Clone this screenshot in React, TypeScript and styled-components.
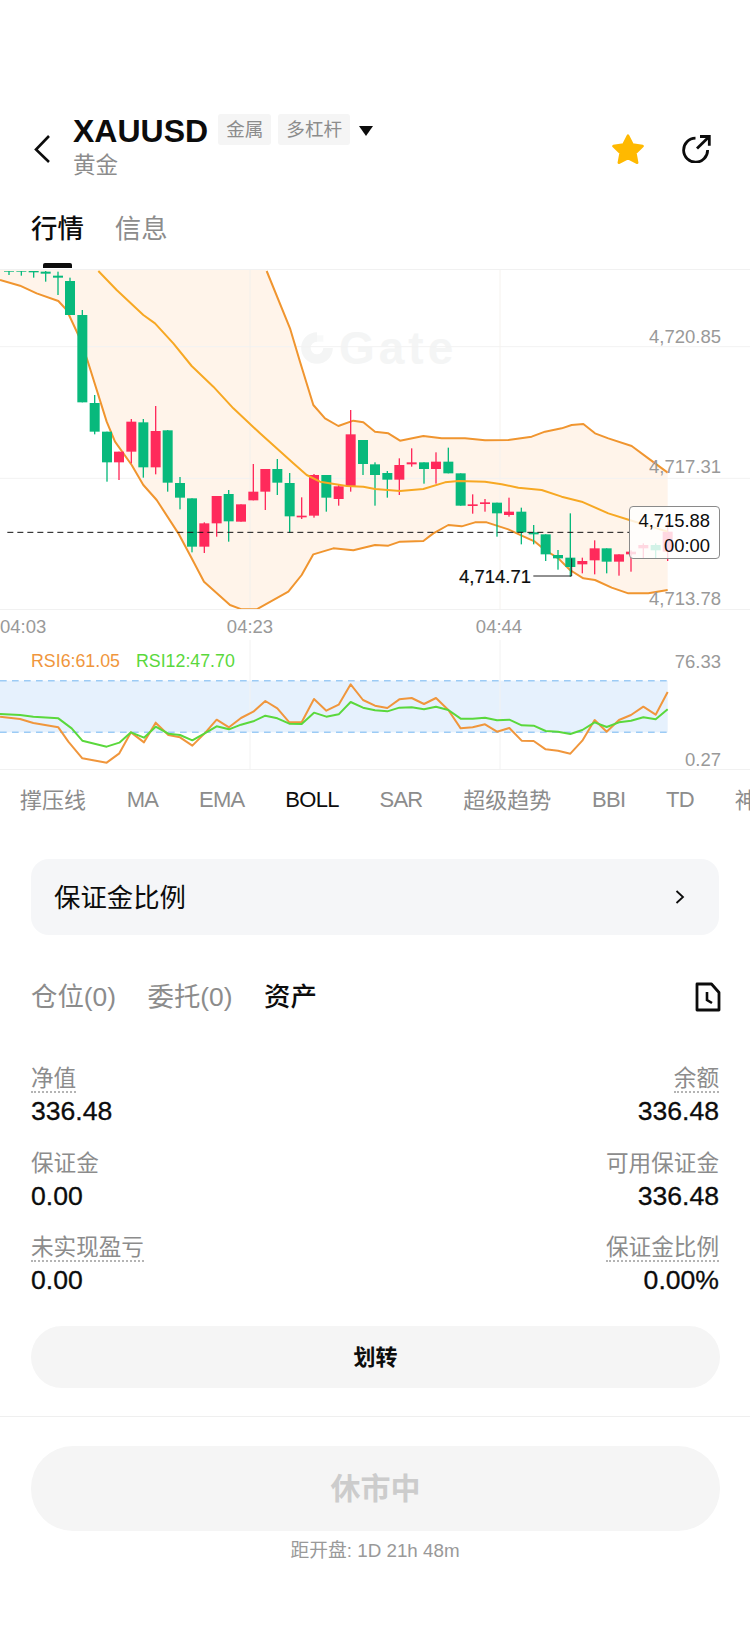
import styled, { createGlobalStyle } from 'styled-components';

const FONT = '"Liberation Sans", "Noto Sans CJK SC", sans-serif';
const GREEN = '#08b97c';
const RED = '#ff2a5b';

const GlobalStyle = createGlobalStyle`
  html, body {
    margin: 0;
    padding: 0;
    background: #ffffff;
  }
`;

const S = {
  Page: styled.div`
    width: 750px;
    height: 1626px;
    overflow: hidden;
    background: #ffffff;
    color: #0c0c0c;
    font-family: ${FONT};
  `,
  TopBar: styled.header`
    display: flex;
    align-items: flex-start;
    padding: 114px 39px 0 33px;
  `,
  BackIcon: styled.svg`
    width: 18px;
    height: 30px;
    margin: 20px 22px 0 0;
    flex: none;
  `,
  TitleBlock: styled.div`
    flex: 1;
  `,
  TitleRow: styled.div`
    display: flex;
    align-items: flex-start;
    height: 31px;
  `,
  Symbol: styled.h1`
    margin: 1px 10px 0 0;
    font-size: 32px;
    line-height: 32px;
    font-weight: 700;
  `,
  Tag: styled.span`
    height: 31px;
    padding: 0 8px;
    margin-right: 7px;
    border-radius: 3px;
    background: #f5f5f5;
    color: #8c8c8c;
    font-size: 18.6px;
    line-height: 31px;
  `,
  Caret: styled.span`
    width: 0;
    height: 0;
    margin: 12px 0 0 2px;
    border-left: 7px solid transparent;
    border-right: 7px solid transparent;
    border-top: 10px solid #0c0c0c;
  `,
  SubTitle: styled.div`
    margin-top: 6px;
    font-size: 22.6px;
    line-height: 30px;
    color: #8c8c8c;
  `,
  Actions: styled.div`
    display: flex;
    align-items: center;
    gap: 37px;
    margin-top: 19px;
  `,
  TabBar: styled.nav`
    display: flex;
    gap: 31px;
    height: 58px;
    margin-top: 30px;
    padding-left: 31px;
  `,
  Tab: styled.div<{ $active?: boolean }>`
    display: flex;
    flex-direction: column;
    align-items: center;
    gap: 16px;
    font-size: 26.4px;
    line-height: 36px;
    font-weight: ${p => (p.$active ? 500 : 400)};
    color: ${p => (p.$active ? '#0c0c0c' : '#8c8c8c')};
    &::after {
      content: '';
      display: ${p => (p.$active ? 'block' : 'none')};
      width: 29px;
      height: 5px;
      border-radius: 2px 2px 0 0;
      background: #0c0c0c;
    }
  `,
  ChartCanvas: styled.section`
    position: relative;
    width: 750px;
    height: 341px;
    border-top: 1px solid #f1f1f1;
    border-bottom: 1px solid #f1f1f1;
    box-sizing: border-box;
  `,
  ChartSvg: styled.svg`
    position: relative;
    z-index: 1;
    display: block;
    width: 750px;
  `,
  Watermark: styled.div`
    position: absolute;
    top: 55px;
    left: 298px;
    display: flex;
    align-items: center;
    gap: 3px;
    color: #f4f5f5;
    font-size: 46px;
    line-height: 46px;
    font-weight: 700;
    letter-spacing: 4px;
  `,
  PriceLabel: styled.span<{ $center: number }>`
    position: absolute;
    z-index: 2;
    right: 29px;
    top: ${p => p.$center - 11}px;
    font-size: 18.5px;
    line-height: 22px;
    color: #999999;
  `,
  Tooltip: styled.div`
    position: absolute;
    z-index: 3;
    left: 629px;
    top: 236px;
    width: 91px;
    height: 53px;
    box-sizing: border-box;
    padding: 1px 9px 0 0;
    border: 1px solid #8a8a8a;
    border-radius: 4px;
    background: rgba(255, 255, 255, 0.82);
    text-align: right;
    font-size: 18.4px;
    line-height: 25px;
    color: #0c0c0c;
  `,
  LowLabel: styled.span`
    position: absolute;
    z-index: 2;
    right: 219px;
    top: 296px;
    font-size: 18.5px;
    line-height: 22px;
    color: #0c0c0c;
    -webkit-text-stroke: 0.2px #0c0c0c;
  `,
  TimeAxis: styled.div`
    position: relative;
    height: 30px;
  `,
  TimeLabel: styled.span<{ $center?: number }>`
    position: absolute;
    top: 6px;
    left: ${p => (p.$center === undefined ? 0 : `${p.$center}px`)};
    transform: ${p => (p.$center === undefined ? 'none' : 'translateX(-50%)')};
    font-size: 18.5px;
    line-height: 22px;
    color: #999999;
  `,
  RsiCanvas: styled.section`
    position: relative;
    width: 750px;
    height: 130px;
    box-sizing: border-box;
    border-bottom: 1px solid #f1f1f1;
  `,
  RsiLegend: styled.div`
    position: absolute;
    z-index: 2;
    top: 10px;
    left: 31px;
    display: flex;
    gap: 16px;
    font-size: 17.8px;
    line-height: 22px;
  `,
  RsiValue: styled.span<{ $color: string }>`
    color: ${p => p.$color};
  `,
  IndicatorBar: styled.nav`
    display: flex;
    align-items: center;
    gap: 40.7px;
    height: 60px;
    padding-left: 20px;
    overflow: hidden;
    white-space: nowrap;
  `,
  Indicator: styled.span<{ $active?: boolean; $cjk?: boolean }>`
    flex: none;
    font-size: 22px;
    letter-spacing: ${p => (p.$cjk ? '0' : '-0.7px')};
    transform: translateY(${p => (p.$cjk ? '-2px' : '0')});
    color: ${p => (p.$active ? '#0c0c0c' : '#8c8c8c')};
  `,
  MarginCard: styled.div`
    display: flex;
    align-items: center;
    justify-content: space-between;
    height: 76px;
    box-sizing: border-box;
    margin: 29px 31px 0;
    padding: 0 34px 4px 23px;
    border-radius: 18px;
    background: #f5f6f8;
    font-size: 26.4px;
    svg {
      margin-top: 4px;
    }
  `,
  PositionTabs: styled.div`
    display: flex;
    align-items: center;
    gap: 31.5px;
    height: 36px;
    margin: 44px 29px 0 31px;
  `,
  PositionTab: styled.span<{ $active?: boolean }>`
    font-size: 26.4px;
    line-height: 36px;
    font-weight: ${p => (p.$active ? 500 : 400)};
    color: ${p => (p.$active ? '#0c0c0c' : '#8c8c8c')};
  `,
  HistoryIcon: styled.svg`
    width: 26px;
    height: 30px;
    margin-left: auto;
  `,
  StatsGrid: styled.div`
    display: grid;
    grid-template-columns: 1fr 1fr;
    grid-auto-rows: 84.5px;
    margin: 52px 31px 0;
  `,
  Stat: styled.div<{ $right?: boolean }>`
    display: flex;
    flex-direction: column;
    align-items: ${p => (p.$right ? 'flex-end' : 'flex-start')};
  `,
  StatLabel: styled.span<{ $dotted?: boolean }>`
    height: 24px;
    font-size: 22.6px;
    line-height: 24px;
    color: #8c8c8c;
    border-bottom: 2px dotted ${p => (p.$dotted ? '#b4b4b4' : 'transparent')};
  `,
  StatValue: styled.span`
    margin-top: 3px;
    font-size: 26.6px;
    line-height: 30px;
    color: #0c0c0c;
    -webkit-text-stroke: 0.3px #0c0c0c;
  `,
  TransferButton: styled.button`
    display: block;
    width: 689px;
    height: 62px;
    margin: 5px 0 0 31px;
    padding: 0 0 4px;
    border: 0;
    border-radius: 31px;
    background: #f5f5f5;
    color: #0c0c0c;
    font-family: ${FONT};
    font-size: 22px;
    font-weight: 700;
  `,
  Divider: styled.hr`
    height: 1px;
    margin: 28px 0 0;
    border: 0;
    background: #efefef;
  `,
  ClosedButton: styled.button`
    display: block;
    width: 689px;
    height: 85px;
    margin: 29px 0 0 31px;
    padding: 0 0 4px;
    border: 0;
    border-radius: 42px;
    background: #f5f5f5;
    color: #cccccc;
    font-family: ${FONT};
    font-size: 30px;
    font-weight: 700;
  `,
  Countdown: styled.div`
    margin-top: 8px;
    text-align: center;
    font-size: 18.8px;
    line-height: 24px;
    color: #999999;
  `,
};

// all chart coordinates below are in 1/3 px, y measured from page y=265
type Candle = [number, number, number, number, number, 'g' | 'r'];

const candles: Candle[] = [
  [27, 18, 30, 18, 20, 'g'],
  [64, 18, 32, 18, 20, 'g'],
  [101, 18, 38, 18, 22, 'g'],
  [137, 18, 50, 20, 26, 'g'],
  [174, 20, 90, 32, 38, 'g'],
  [210, 38, 150, 48, 150, 'g'],
  [247, 135, 412, 150, 412, 'g'],
  [284, 390, 508, 414, 500, 'g'],
  [321, 500, 650, 500, 592, 'g'],
  [357, 560, 645, 560, 592, 'r'],
  [394, 462, 595, 470, 560, 'r'],
  [430, 462, 638, 472, 607, 'g'],
  [467, 423, 628, 498, 607, 'r'],
  [503, 495, 680, 496, 653, 'g'],
  [540, 636, 733, 654, 698, 'g'],
  [576, 700, 862, 700, 845, 'g'],
  [613, 772, 864, 775, 845, 'r'],
  [650, 693, 815, 693, 775, 'r'],
  [686, 675, 830, 687, 769, 'g'],
  [723, 718, 770, 718, 770, 'r'],
  [760, 597, 706, 680, 706, 'r'],
  [796, 612, 735, 612, 680, 'r'],
  [832, 582, 690, 612, 653, 'g'],
  [869, 624, 803, 654, 754, 'g'],
  [905, 697, 762, 752, 757, 'r'],
  [942, 627, 758, 630, 752, 'r'],
  [979, 630, 740, 630, 698, 'g'],
  [1016, 660, 722, 664, 702, 'r'],
  [1052, 435, 680, 508, 663, 'r'],
  [1089, 525, 630, 525, 597, 'g'],
  [1125, 592, 722, 598, 630, 'g'],
  [1162, 618, 698, 624, 644, 'g'],
  [1198, 580, 690, 600, 644, 'r'],
  [1235, 550, 605, 592, 598, 'r'],
  [1272, 592, 656, 592, 612, 'g'],
  [1308, 562, 656, 590, 612, 'r'],
  [1345, 548, 625, 590, 625, 'g'],
  [1382, 625, 722, 625, 722, 'g'],
  [1418, 688, 746, 718, 723, 'r'],
  [1455, 702, 740, 712, 717, 'r'],
  [1491, 713, 815, 713, 745, 'g'],
  [1527, 698, 755, 740, 750, 'r'],
  [1564, 728, 838, 740, 802, 'g'],
  [1601, 780, 838, 802, 808, 'g'],
  [1637, 808, 888, 808, 868, 'g'],
  [1674, 855, 914, 870, 880, 'g'],
  [1711, 745, 935, 878, 906, 'g'],
  [1747, 878, 925, 888, 898, 'r'],
  [1784, 826, 928, 850, 886, 'r'],
  [1820, 850, 925, 850, 890, 'g'],
  [1857, 868, 932, 868, 890, 'r'],
  [1893, 856, 920, 860, 868, 'r'],
  [1930, 835, 882, 840, 850, 'r'],
  [1967, 835, 880, 840, 856, 'g'],
  [2003, 770, 888, 800, 860, 'r'],
];

const upperBand = '800,18 870,190 900,290 940,420 975,460 1015,483 1060,467 1090,472 1125,500 1165,505 1200,527 1270,513 1325,520 1395,520 1455,526 1525,525 1595,515 1635,500 1685,490 1715,480 1750,477 1785,505 1825,520 1895,543 1945,580 2003,623';
const middleBand = '295,18 350,75 430,150 465,175 520,235 575,303 640,365 700,430 780,505 830,550 880,595 920,630 960,650 1040,663 1090,665 1125,672 1200,678 1270,672 1335,652 1375,648 1455,650 1505,658 1555,668 1625,675 1685,695 1745,710 1825,745 1888,765 2003,800';
const lowerBand = '0,45 60,62 110,85 175,108 200,135 235,210 262,285 320,470 345,530 395,600 430,660 470,705 535,805 575,880 612,950 690,1020 725,1033 770,1033 865,980 905,930 940,868 1000,850 1060,856 1125,840 1165,842 1200,830 1270,828 1300,805 1345,780 1385,784 1425,772 1460,772 1525,793 1565,812 1605,830 1635,855 1675,880 1710,915 1750,940 1785,945 1835,968 1885,985 1945,985 2003,975';
const bandFill = `0,12 800,12 ${upperBand} ${lowerBand.split(' ').reverse().join(' ')}`;

const rsi6 = '0,290 60,297 100,309 175,322 205,365 247,415 320,428 358,400 393,337 432,367 467,308 505,345 540,352 577,377 614,340 650,299 687,322 723,294 760,275 796,243 832,265 868,307 905,307 942,237 979,272 1016,254 1052,193 1089,240 1125,257 1162,264 1198,238 1235,234 1272,252 1308,234 1345,270 1382,325 1418,322 1455,313 1491,335 1528,324 1565,362 1601,363 1637,388 1674,392 1711,401 1747,362 1784,300 1820,335 1857,300 1893,285 1930,260 1967,284 2003,216';
const rsi12 = '0,282 60,285 100,290 175,295 215,325 247,362 320,380 358,368 393,337 432,353 467,320 505,341 540,345 577,361 614,340 650,319 687,328 723,314 760,304 796,287 832,295 868,311 905,312 942,278 979,290 1016,283 1052,246 1089,263 1125,271 1162,274 1198,263 1235,262 1272,268 1308,260 1345,270 1382,296 1418,296 1455,293 1491,301 1528,299 1565,316 1601,317 1637,333 1674,335 1711,342 1747,330 1784,307 1820,321 1857,307 1893,302 1930,292 1967,298 2003,268';

const indicators = ['撑压线', 'MA', 'EMA', 'BOLL', 'SAR', '超级趋势', 'BBI', 'TD', '神'];

const stats = [
  { label: '净值', value: '336.48', dotted: true },
  { label: '余额', value: '336.48', dotted: true, right: true },
  { label: '保证金', value: '0.00' },
  { label: '可用保证金', value: '336.48', right: true },
  { label: '未实现盈亏', value: '0.00', dotted: true },
  { label: '保证金比例', value: '0.00%', dotted: true, right: true },
];

function CandleMark({ c }: { c: Candle }) {
  const [x, wickTop, wickBottom, bodyTop, bodyBottom, side] = c;
  const color = side === 'g' ? GREEN : RED;
  return (
    <g fill={color}>
      <rect x={x - 2} y={wickTop} width={4} height={wickBottom - wickTop} />
      <rect x={x - 15} y={bodyTop} width={30} height={bodyBottom - bodyTop} />
    </g>
  );
}

function MainChart() {
  return (
    <S.ChartCanvas>
      <S.Watermark>
        <svg width="38" height="38" viewBox="0 0 36 36" fill="none">
          <path d="M18 3a15 15 0 1 0 15 15h-9a6 6 0 1 1-6-6V3z" fill="#f4f5f5" />
          <path d="M18 12h6V6h-6z" fill="#f4f5f5" opacity="0.6" />
        </svg>
        Gate
      </S.Watermark>
      <S.ChartSvg viewBox="0 15 2250 1017" height="339">
        <polygon points={bandFill} fill="#fff4ea" />
        <line x1="0" y1="245" x2="2250" y2="245" stroke="#f2f2f2" strokeWidth="3" />
        <line x1="0" y1="640" x2="2250" y2="640" stroke="#f2f2f2" strokeWidth="3" />
        <line x1="750" y1="12" x2="750" y2="1035" stroke="#f2f0ec" strokeWidth="3" />
        <line x1="1500" y1="12" x2="1500" y2="1035" stroke="#f5f2ee" strokeWidth="3" />
        <polyline points={upperBand} fill="none" stroke="#f0952f" strokeWidth="6" strokeLinejoin="round" />
        <polyline points={lowerBand} fill="none" stroke="#f0952f" strokeWidth="6" strokeLinejoin="round" />
        {candles.map(c => (
          <CandleMark key={c[0]} c={c} />
        ))}
        <polyline points={middleBand} fill="none" stroke="#f7a823" strokeWidth="6" strokeLinejoin="round" />
        <line x1="22" y1="802" x2="1888" y2="802" stroke="#111111" strokeWidth="3" strokeDasharray="18 12" />
        <polyline points="1600,933 1715,933 1715,880" fill="none" stroke="#222222" strokeWidth="3" />
      </S.ChartSvg>
      <S.PriceLabel $center={67}>4,720.85</S.PriceLabel>
      <S.PriceLabel $center={197}>4,717.31</S.PriceLabel>
      <S.PriceLabel $center={329}>4,713.78</S.PriceLabel>
      <S.LowLabel>4,714.71</S.LowLabel>
      <S.Tooltip>
        <div>4,715.88</div>
        <div>00:00</div>
      </S.Tooltip>
    </S.ChartCanvas>
  );
}

function RsiChart() {
  return (
    <S.RsiCanvas>
      <S.RsiLegend>
        <S.RsiValue $color="#f0963c">RSI6:61.05</S.RsiValue>
        <S.RsiValue $color="#5ad83c">RSI12:47.70</S.RsiValue>
      </S.RsiLegend>
      <S.ChartSvg viewBox="0 60 2250 387" height="129">
        <rect x="0" y="182" width="2003" height="155" fill="#e6f1fd" />
        <line x1="750" y1="60" x2="750" y2="450" stroke="#f2f2f2" strokeWidth="3" />
        <line x1="1500" y1="60" x2="1500" y2="450" stroke="#f2f2f2" strokeWidth="3" />
        <line x1="0" y1="182" x2="2003" y2="182" stroke="#9ccbf5" strokeWidth="4.5" strokeDasharray="20 16" />
        <line x1="0" y1="337" x2="2003" y2="337" stroke="#9ccbf5" strokeWidth="4.5" strokeDasharray="20 16" />
        <polyline points={rsi6} fill="none" stroke="#f0963c" strokeWidth="6" strokeLinejoin="round" />
        <polyline points={rsi12} fill="none" stroke="#5ad83c" strokeWidth="6" strokeLinejoin="round" />
      </S.ChartSvg>
      <S.PriceLabel $center={22}>76.33</S.PriceLabel>
      <S.PriceLabel $center={120}>0.27</S.PriceLabel>
    </S.RsiCanvas>
  );
}

export default function App() {
  return (
    <S.Page>
      <GlobalStyle />
      <S.TopBar>
        <S.BackIcon viewBox="0 0 18 30" fill="none">
          <path d="M16 2 3 15.5 16 28" stroke="#0c0c0c" strokeWidth="2.6" />
        </S.BackIcon>
        <S.TitleBlock>
          <S.TitleRow>
            <S.Symbol>XAUUSD</S.Symbol>
            <S.Tag>金属</S.Tag>
            <S.Tag>多杠杆</S.Tag>
            <S.Caret />
          </S.TitleRow>
          <S.SubTitle>黄金</S.SubTitle>
        </S.TitleBlock>
        <S.Actions>
          <svg width="34" height="32" viewBox="0 0 34 32">
            <polygon
              points="17,2.5 21.6,11.6 31.6,13 24.4,20 26.2,29.8 17,25.2 7.8,29.8 9.6,20 2.4,13 12.4,11.6"
              fill="#ffb900"
              stroke="#ffb900"
              strokeWidth="2.5"
              strokeLinejoin="round"
            />
          </svg>
          <svg width="29" height="28" viewBox="0 0 29 28" fill="none" stroke="#0c0c0c" strokeWidth="2.8">
            <path d="M13.5 3.2A12 12 0 1 0 25.6 15" />
            <path d="M15 13.5 27 1.8" />
            <path d="M18 1.5h9.3v9.3" />
          </svg>
        </S.Actions>
      </S.TopBar>

      <S.TabBar>
        <S.Tab $active>行情</S.Tab>
        <S.Tab>信息</S.Tab>
      </S.TabBar>

      <MainChart />
      <S.TimeAxis>
        <S.TimeLabel>04:03</S.TimeLabel>
        <S.TimeLabel $center={250}>04:23</S.TimeLabel>
        <S.TimeLabel $center={499}>04:44</S.TimeLabel>
      </S.TimeAxis>
      <RsiChart />

      <S.IndicatorBar>
        {indicators.map(name => (
          <S.Indicator key={name} $active={name === 'BOLL'} $cjk={!/[A-Z]/.test(name)}>
            {name}
          </S.Indicator>
        ))}
      </S.IndicatorBar>

      <S.MarginCard>
        保证金比例
        <svg width="10" height="14" viewBox="0 0 10 14" fill="none">
          <path d="M1.5 1 8 7l-6.5 6" stroke="#0c0c0c" strokeWidth="1.8" />
        </svg>
      </S.MarginCard>

      <S.PositionTabs>
        <S.PositionTab>仓位(0)</S.PositionTab>
        <S.PositionTab>委托(0)</S.PositionTab>
        <S.PositionTab $active>资产</S.PositionTab>
        <S.HistoryIcon viewBox="0 0 26 30" fill="none" stroke="#0c0c0c" strokeWidth="2.8">
          <path d="M2 2h14.5L24 10.5V28H2z" strokeLinejoin="round" />
          <path d="M12 10v8l5 3" strokeWidth="2.6" />
        </S.HistoryIcon>
      </S.PositionTabs>

      <S.StatsGrid>
        {stats.map(s => (
          <S.Stat key={s.label} $right={s.right}>
            <S.StatLabel $dotted={s.dotted}>{s.label}</S.StatLabel>
            <S.StatValue>{s.value}</S.StatValue>
          </S.Stat>
        ))}
      </S.StatsGrid>

      <S.TransferButton>划转</S.TransferButton>
      <S.Divider />
      <S.ClosedButton>休市中</S.ClosedButton>
      <S.Countdown>距开盘: 1D 21h 48m</S.Countdown>
    </S.Page>
  );
}
